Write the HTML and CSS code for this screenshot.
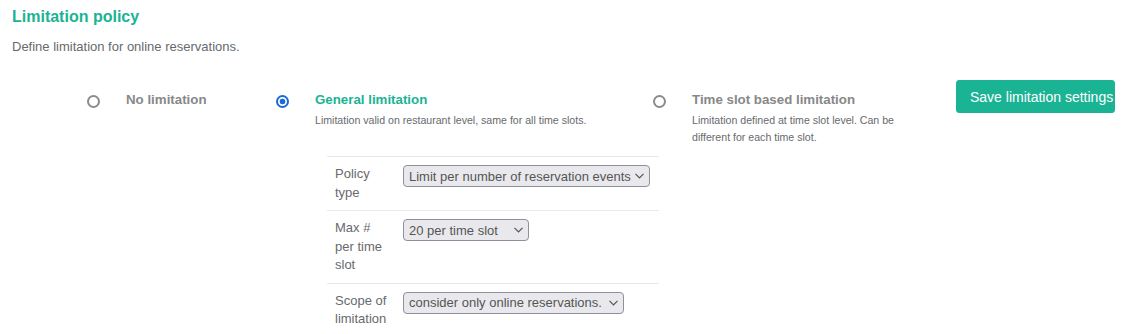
FILE: index.html
```html
<!DOCTYPE html>
<html lang="en">
<head>
  <meta charset="UTF-8">
  <title>Limitation policy</title>
  <link rel="stylesheet" href="styles.css">
</head>
<body>
  <div class="page">
    <h2 class="title">Limitation policy</h2>
    <p class="intro">Define limitation for online reservations.</p>

    <div class="options">
      <label class="option option-none">
        <input type="radio" name="limit" value="none">
        <div class="option-text">
          <div class="option-label">No limitation</div>
        </div>
      </label>

      <div class="option option-general">
        <input type="radio" name="limit" value="general" checked>
        <div class="option-text">
          <div class="option-label active">General limitation</div>
          <div class="option-desc">Limitation valid on restaurant level, same for all time slots.</div>
          <table class="policy-table">
            <tr>
              <td class="policy-label">Policy type</td>
              <td>
                <span class="select-box">
                  <select class="select-type">
                    <option>Limit per number of reservation events</option>
                  </select>
                  <svg class="chevron" width="9" height="6" viewBox="0 0 9 6"><path d="M0.5 0.8 L4.5 4.8 L8.5 0.8" fill="none" stroke="#555" stroke-width="1.2"/></svg>
                </span>
              </td>
            </tr>
            <tr>
              <td class="policy-label">Max # per time slot</td>
              <td>
                <span class="select-box">
                  <select class="select-max">
                    <option>20 per time slot</option>
                  </select>
                  <svg class="chevron" width="9" height="6" viewBox="0 0 9 6"><path d="M0.5 0.8 L4.5 4.8 L8.5 0.8" fill="none" stroke="#555" stroke-width="1.2"/></svg>
                </span>
              </td>
            </tr>
            <tr>
              <td class="policy-label">Scope of limitation</td>
              <td>
                <span class="select-box">
                  <select class="select-scope">
                    <option>consider only online reservations.</option>
                  </select>
                  <svg class="chevron" width="9" height="6" viewBox="0 0 9 6"><path d="M0.5 0.8 L4.5 4.8 L8.5 0.8" fill="none" stroke="#555" stroke-width="1.2"/></svg>
                </span>
              </td>
            </tr>
          </table>
        </div>
      </div>

      <label class="option option-slot">
        <input type="radio" name="limit" value="slot">
        <div class="option-text">
          <div class="option-label">Time slot based limitation</div>
          <div class="option-desc">Limitation defined at time slot level. Can be different for each time slot.</div>
        </div>
      </label>

      <button class="save-btn">Save limitation settings</button>
    </div>
  </div>
</body>
</html>
```

FILE: styles.css
```css
body {
  margin: 0;
  padding: 0;
  font-family: "Liberation Sans", Arial, sans-serif;
  color: #676a6c;
  background-color: #fff;
}
.page {
  padding: 0 12px;
}
.title {
  margin: 8px 0 0;
  font-size: 16px;
  line-height: 18px;
  font-weight: bold;
  color: #1ab394;
}
.intro {
  margin: 12px 0 0;
  font-size: 13px;
  line-height: 17px;
}
.options {
  display: flex;
  align-items: flex-start;
  margin-top: 25px;
  padding-left: 75px;
}
.option {
  display: flex;
  align-items: flex-start;
  flex-shrink: 0;
}
.option input[type="radio"] {
  appearance: none;
  box-sizing: border-box;
  width: 13px;
  height: 13px;
  margin: 15px 26px 0 0;
  flex-shrink: 0;
  border: 2px solid #8b8b8b;
  border-radius: 50%;
  background-color: #fff;
}
.option input[type="radio"]:checked {
  border-color: #1a6ad8;
  background: radial-gradient(circle, #1a6ad8 0 2.6px, #fff 3.2px);
}
.option-none {
  width: 189px;
}
.option-general {
  width: 377px;
}
.option-slot {
  width: 303px;
}
.option-slot .option-text {
  width: 225px;
}
.option-text {
  padding-top: 11px;
}
.option-label {
  font-size: 13.3px;
  line-height: 18px;
  font-weight: bold;
  color: #888;
}
.option-label.active {
  color: #1ab394;
}
.option-desc {
  margin-top: 3px;
  font-size: 10.6px;
  line-height: 17px;
}
.policy-table {
  margin: 27px 0 0 12px;
  width: 332px;
  border-collapse: collapse;
  font-size: 13px;
  line-height: 1.42857;
}
.policy-table td {
  padding: 8px;
  border-top: 1px solid #e7eaec;
  vertical-align: top;
}
.policy-table .policy-label {
  width: 52px;
}
.select-box {
  position: relative;
  display: inline-block;
}
.select-box select {
  appearance: none;
  box-sizing: border-box;
  height: 22px;
  padding: 0 0 0 5px;
  border: 1px solid #8f8f9d;
  border-radius: 4px;
  background-color: #e9e9ed;
  color: #555;
  font-family: "Liberation Sans", Arial, sans-serif;
  font-size: 13px;
}
.select-type {
  width: 247px;
}
.select-max {
  width: 126px;
}
.select-scope {
  width: 221px;
}
.chevron {
  position: absolute;
  right: 6px;
  top: 8px;
  pointer-events: none;
}
.save-btn {
  flex-shrink: 0;
  width: 159px;
  height: 33px;
  padding: 0 0 0 13px;
  text-align: left;
  white-space: nowrap;
  overflow: hidden;
  background-color: #1ab394;
  border: 1px solid #1ab394;
  border-radius: 3px;
  color: #fff;
  font-family: "Liberation Sans", Arial, sans-serif;
  font-size: 14px;
  cursor: pointer;
}
```
